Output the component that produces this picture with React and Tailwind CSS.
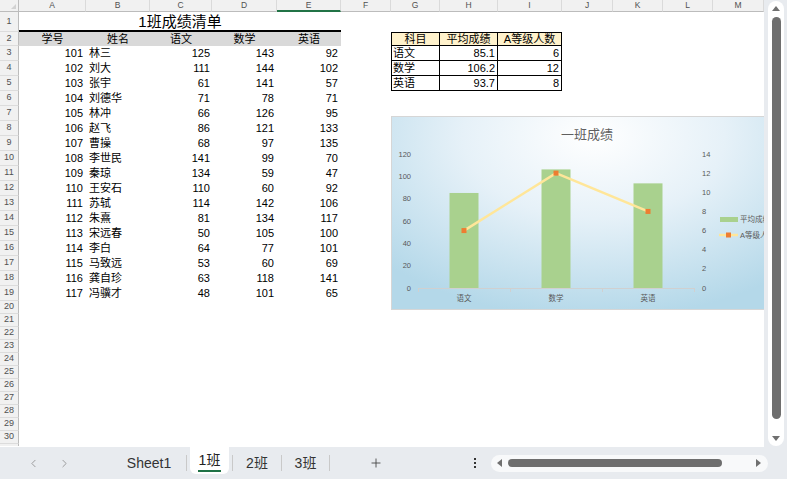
import { ChevronLeft, ChevronRight, Plus } from 'lucide-react'
import clsx from 'clsx'

const FONT = "font-['Liberation_Sans','Noto_Sans_CJK_SC',sans-serif]"

const COLS = [
  { l: 'A', w: 'w-[67px]' },
  { l: 'B', w: 'w-[64px]' },
  { l: 'C', w: 'w-[62px]' },
  { l: 'D', w: 'w-[65px]' },
  { l: 'E', w: 'w-[64px]' },
  { l: 'F', w: 'w-[50px]' },
  { l: 'G', w: 'w-[49px]' },
  { l: 'H', w: 'w-[58px]' },
  { l: 'I', w: 'w-[64px]' },
  { l: 'J', w: 'w-[51px]' },
  { l: 'K', w: 'w-[50px]' },
  { l: 'L', w: 'w-[50px]' },
  { l: 'M', w: 'w-[51px]' },
]

const STUDENTS = [
  [101, '林三', 125, 143, 92],
  [102, '刘大', 111, 144, 102],
  [103, '张宇', 61, 141, 57],
  [104, '刘德华', 71, 78, 71],
  [105, '林冲', 66, 126, 95],
  [106, '赵飞', 86, 121, 133],
  [107, '曹操', 68, 97, 135],
  [108, '李世民', 141, 99, 70],
  [109, '秦琼', 134, 59, 47],
  [110, '王安石', 110, 60, 92],
  [111, '苏轼', 114, 142, 106],
  [112, '朱熹', 81, 134, 117],
  [113, '宋远春', 50, 105, 100],
  [114, '李白', 64, 77, 101],
  [115, '马致远', 53, 60, 69],
  [116, '龚自珍', 63, 118, 141],
  [117, '冯骥才', 48, 101, 65],
]

const SUMMARY = [
  ['语文', '85.1', '6'],
  ['数学', '106.2', '12'],
  ['英语', '93.7', '8'],
]

function RowHead({ n, h }) {
  return (
    <div className={clsx('w-[19px] shrink-0 flex items-center justify-center bg-[#f1f1f1] border-r border-r-[#bcbcbc] border-b border-b-[#dcdcdc] text-[9px] text-[#505050]', h)}>
      {n}
    </div>
  )
}

function Cell({ i, children, className }) {
  return (
    <div className={clsx(COLS[i].w, 'shrink-0 h-full flex items-center whitespace-nowrap overflow-visible', className)}>
      {children}
    </div>
  )
}

// G..I summary table cell borders
function sumCell(i, first) {
  return clsx('border-r border-b border-black', i === 6 && 'border-l', first && 'border-t')
}

function Chart() {
  const base = 171
  const leftY = (v) => base - (v * 134) / 120
  const rightY = (v) => base - (v * 134) / 14
  const data = SUMMARY.map(([n, v, a], i) => ({ n, v: parseFloat(v), a: +a, cx: 72 + i * 92 }))
  const pts = data.map((d) => `${d.cx},${rightY(d.a)}`).join(' ')

  return (
    <div className="absolute left-[391px] top-[116px] w-[390px] h-[194px] border border-[#d6d6d6] bg-[radial-gradient(ellipse_75%_95%_at_52%_10%,#ffffff_0%,#e6f1f8_45%,#b4d8e9_100%)]">
      <svg width="390" height="194" className="block" fontFamily="Liberation Sans, Noto Sans CJK SC, sans-serif">
        <text x="195" y="22" textAnchor="middle" fontSize="13" fill="#5f5f5f">一班成绩</text>

        {[0, 20, 40, 60, 80, 100, 120].map((v) => (
          <text key={v} x="19" y={leftY(v) + 2.5} textAnchor="end" fontSize="7.5" fill="#595959">{v}</text>
        ))}
        {[0, 2, 4, 6, 8, 10, 12, 14].map((v) => (
          <text key={v} x="310" y={rightY(v) + 2.5} fontSize="7.5" fill="#595959">{v}</text>
        ))}

        {data.map((d) => (
          <rect key={d.n} x={d.cx - 14.5} y={leftY(d.v)} width="29" height={base - leftY(d.v)} fill="#a9d18e" />
        ))}

        <line x1="26" y1={base + 0.5} x2="302" y2={base + 0.5} stroke="#d0d0d0" />
        {[26, 118, 210, 302].map((x) => (
          <line key={x} x1={x + 0.5} y1={base} x2={x + 0.5} y2={base + 4} stroke="#d0d0d0" />
        ))}

        <polyline points={pts} fill="none" stroke="#ffe699" strokeWidth="2.5" />
        {data.map((d) => (
          <rect key={d.n} x={d.cx - 2.5} y={rightY(d.a) - 2.5} width="5" height="5" fill="#ed7d31" />
        ))}

        {data.map((d) => (
          <text key={d.n} x={d.cx} y="184" textAnchor="middle" fontSize="7.5" fill="#595959">{d.n}</text>
        ))}

        {/* legend */}
        <rect x="328" y="100" width="18" height="5" fill="#a9d18e" />
        <text x="348" y="104.5" fontSize="7.5" fill="#595959">平均成绩</text>
        <line x1="327" y1="118" x2="346" y2="118" stroke="#ffe699" strokeWidth="2.5" />
        <rect x="334" y="115.5" width="5" height="5" fill="#ed7d31" />
        <text x="348" y="121" fontSize="7.5" fill="#595959">A等级人数</text>
      </svg>
    </div>
  )
}

function Sheet() {
  return (
    <div className="relative w-[764px] h-full overflow-hidden bg-white">
      {/* column letters */}
      <div className="flex h-[12px]">
        <div className="w-[19px] shrink-0 relative bg-[#f1f1f1] border-r border-r-[#bcbcbc] border-b border-b-[#bcbcbc]">
          <div className="absolute right-[2px] bottom-[2px] w-0 h-0 border-l-[5px] border-l-transparent border-b-[5px] border-b-[#d2d2d2]" />
        </div>
        {COLS.map((c) => (
          <div
            key={c.l}
            className={clsx(
              c.w,
              'shrink-0 flex items-center justify-center bg-[#f1f1f1] border-r border-r-[#dadada] text-[8.5px] text-[#505050]',
              c.l === 'E' ? 'border-b-2 border-b-[#217346] bg-[#e6e6e6]' : 'border-b border-b-[#bcbcbc]'
            )}
          >
            {c.l}
          </div>
        ))}
      </div>

      {/* row 1: title */}
      <div className="flex h-[20px]">
        <RowHead n={1} h="h-[20px]" />
        <div className="w-[322px] shrink-0 border-b-2 border-black flex items-center justify-center text-[15px] leading-none text-black">
          1班成绩清单
        </div>
      </div>

      {/* row 2: headers */}
      <div className="flex h-[14px] text-[11px] text-black">
        <RowHead n={2} h="h-[14px]" />
        {['学号', '姓名', '语文', '数学', '英语'].map((t, i) => (
          <Cell key={t} i={i} className="justify-center bg-[#d9d9d9]">{t}</Cell>
        ))}
        <Cell i={5} />
        {['科目', '平均成绩', 'A等级人数'].map((t, k) => (
          <Cell key={t} i={6 + k} className={clsx('justify-center bg-[#fff2cc]', sumCell(6 + k, true))}>{t}</Cell>
        ))}
      </div>

      {/* rows 3..19 */}
      {STUDENTS.map((s, r) => {
        const sum = SUMMARY[r]
        return (
          <div key={s[0]} className="flex h-[15px] text-[11px] text-black">
            <RowHead n={r + 3} h="h-[15px]" />
            <Cell i={0} className="justify-end pr-[3px]">{s[0]}</Cell>
            <Cell i={1} className="pl-[3px]">{s[1]}</Cell>
            <Cell i={2} className="justify-end pr-[2px]">{s[2]}</Cell>
            <Cell i={3} className="justify-end pr-[3px]">{s[3]}</Cell>
            <Cell i={4} className="justify-end pr-[3px]">{s[4]}</Cell>
            <Cell i={5} />
            {sum && (
              <>
                <Cell i={6} className={clsx('pl-[1px]', sumCell(6))}>{sum[0]}</Cell>
                <Cell i={7} className={clsx('justify-end pr-[2px]', sumCell(7))}>{sum[1]}</Cell>
                <Cell i={8} className={clsx('justify-end pr-[2px]', sumCell(8))}>{sum[2]}</Cell>
              </>
            )}
          </div>
        )
      })}

      {/* rows 20..30 */}
      {Array.from({ length: 11 }, (_, k) => (
        <div key={k} className="flex h-[13px]">
          <RowHead n={20 + k} h="h-[13px]" />
        </div>
      ))}
      <div className="flex h-[2px]">
        <div className="w-[19px] bg-[#f1f1f1] border-r border-r-[#bcbcbc]" />
      </div>

      <Chart />
    </div>
  )
}

function VScroll() {
  return (
    <div className="w-[23px] h-full pl-[4px] pt-[1px]">
      <div className="w-[16px] h-[445px] bg-white rounded-full flex flex-col items-center pt-[5px] pb-[5px]">
        <div className="w-0 h-0 border-x-[4px] border-x-transparent border-b-[5px] border-b-[#707070]" />
        <div className="w-[9px] flex-1 mt-[6px] mb-[17px] rounded-full bg-[#6e6e6e]" />
        <div className="w-0 h-0 border-x-[4px] border-x-transparent border-t-[5px] border-t-[#707070]" />
      </div>
    </div>
  )
}

function Sep() {
  return <div className="w-px h-[16px] bg-[#c9c9c9] shrink-0" />
}

function TabBar() {
  return (
    <div className="h-[32px] flex items-center text-[14px] text-[#333]">
      <div className="w-[27px] shrink-0" />
      <ChevronLeft size={13} strokeWidth={1.5} className="text-[#8a8a8a] shrink-0" />
      <div className="w-[18px] shrink-0" />
      <ChevronRight size={13} strokeWidth={1.5} className="text-[#8a8a8a] shrink-0" />
      <div className="w-[48px] shrink-0" />
      <div className="w-[60px] shrink-0 text-center">Sheet1</div>
      <div className="w-[7px] shrink-0" />
      <Sep />
      <div className="w-[3px] shrink-0" />
      <div className="w-[39px] h-[27px] self-start shrink-0 bg-white rounded-b-[6px] flex flex-col items-center pt-[4px]">
        <span className="leading-[18px] text-[#222]">1班</span>
        <div className="w-[23px] h-[2px] bg-[#1e7145] mt-[1px]" />
      </div>
      <div className="w-[3px] shrink-0" />
      <Sep />
      <div className="w-[48px] shrink-0 text-center">2班</div>
      <Sep />
      <div className="w-[47px] shrink-0 text-center">3班</div>
      <Sep />
      <div className="w-[92px] shrink-0 flex justify-center">
        <Plus size={14} strokeWidth={1.5} className="text-[#444]" />
      </div>
      <div className="w-[43px] shrink-0" />
      <div className="w-[20px] shrink-0 flex flex-col items-center gap-[2px]">
        <div className="w-[2px] h-[2px] bg-[#333]" />
        <div className="w-[2px] h-[2px] bg-[#333]" />
        <div className="w-[2px] h-[2px] bg-[#333]" />
      </div>
      <div className="w-[6px] shrink-0" />
      <div className="w-[277px] h-[17px] shrink-0 bg-[#f8f9fa] rounded-full flex items-center pl-[6px] pr-[7px]">
        <div className="w-0 h-0 border-y-[4px] border-y-transparent border-r-[5px] border-r-[#707070]" />
        <div className="w-[214px] h-[8px] ml-[6px] rounded-full bg-[#6e6e6e]" />
        <div className="flex-1" />
        <div className="w-0 h-0 border-y-[4px] border-y-transparent border-l-[5px] border-l-[#707070]" />
      </div>
    </div>
  )
}

export default function App() {
  return (
    <div className={clsx('w-[787px] h-[479px] overflow-hidden flex flex-col bg-[#e8ebef]', FONT)}>
      <div className="flex h-[447px] shrink-0">
        <Sheet />
        <VScroll />
      </div>
      <TabBar />
    </div>
  )
}
